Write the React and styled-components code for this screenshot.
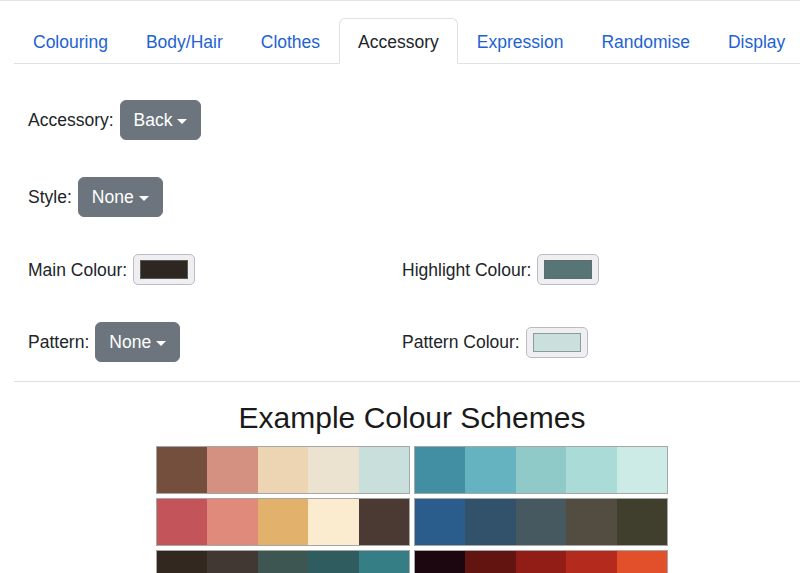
import React from 'react';
import styled, { createGlobalStyle } from 'styled-components';

const GlobalStyle = createGlobalStyle`
  html, body {
    margin: 0;
    padding: 0;
    background: #ffffff;
    overflow: hidden;
  }
  body {
    font-family: "Liberation Sans", Arial, sans-serif;
    color: #212529;
    border-top: 1px solid #e4e4e4;
  }
`;

const Page = styled.div`
  width: 796px;
  margin-left: 14px;
  padding-top: 17px;
`;

const Tabs = styled.ul`
  display: flex;
  list-style: none;
  margin: 0;
  padding: 0;
  border-bottom: 1px solid #dee2e6;
`;

const Tab = styled.li`
  margin-bottom: -1px;
  padding: 9.5px 18px 8.5px;
  font-size: 17.5px;
  line-height: 26px;
  white-space: nowrap;
  border: 1px solid ${(p) => (p.$active ? '#dee2e6' : 'transparent')};
  border-bottom-color: ${(p) => (p.$active ? '#ffffff' : 'transparent')};
  border-radius: 6px 6px 0 0;
  background: ${(p) => (p.$active ? '#ffffff' : 'transparent')};
  color: ${(p) => (p.$active ? '#212529' : '#1d63d3')};
`;

const Form = styled.div`
  display: flex;
  flex-direction: column;
  gap: 37px;
  padding: 36px 14px 19px;
  border-bottom: 1px solid #dcdfe2;
`;

const Pair = styled.div`
  display: grid;
  grid-template-columns: 374px 1fr;
`;

const Field = styled.div`
  display: flex;
  align-items: center;
  gap: 6px;
`;

const Label = styled.span`
  font-size: 17.5px;
  line-height: 26px;
`;

const DropButton = styled.button`
  display: inline-flex;
  align-items: center;
  font-family: inherit;
  font-size: 17.5px;
  line-height: 26px;
  padding: 6px 13px;
  color: #ffffff;
  background: #6c757d;
  border: 1px solid #6c757d;
  border-radius: 6px;

  &::after {
    content: '';
    display: inline-block;
    margin-left: 5px;
    margin-top: 2px;
    border-top: 5px solid #ffffff;
    border-left: 5px solid transparent;
    border-right: 5px solid transparent;
  }
`;

const ColourWell = styled.div`
  box-sizing: border-box;
  width: 62px;
  height: 31px;
  padding: 5px 6px;
  background: #efeff1;
  border: 1px solid #bdb9c6;
  border-radius: 5px;
  display: flex;
`;

const Swatch = styled.div`
  flex: 1;
  background: ${(p) => p.$c};
  border: 1px solid ${(p) => p.$edge};
`;

const Heading = styled.h3`
  margin: 18px 0 10px;
  text-align: center;
  font-size: 30px;
  font-weight: 400;
  line-height: 36px;
  color: #1a1a1a;
`;

const Schemes = styled.div`
  display: grid;
  grid-template-columns: repeat(2, 254px);
  justify-content: center;
  gap: 4px;
`;

const Palette = styled.div`
  display: flex;
  height: 48px;
  box-sizing: border-box;
  border: 1px solid rgba(0, 0, 0, 0.35);
`;

const Chip = styled.div`
  flex: 1;
  background: ${(p) => p.$c};
`;

const tabs = ['Colouring', 'Body/Hair', 'Clothes', 'Accessory', 'Expression', 'Randomise', 'Display'];

const palettes = [
  ['#744f3e', '#d49080', '#edd5b3', '#ebe3d0', '#c9dfdc'],
  ['#428ea3', '#65b2c0', '#8fcac9', '#aadbd6', '#cdebe6'],
  ['#c3545a', '#e08a7b', '#e2b26c', '#fbebcf', '#4a3a33'],
  ['#2a5c8c', '#32526c', '#465860', '#524d40', '#403e2c'],
  ['#322820', '#423833', '#3e5652', '#2f5c5e', '#367e86'],
  ['#1c0610', '#621410', '#921d16', '#b42b1e', '#e1502a'],
];

function ColourInput({ colour, edge }) {
  return (
    <ColourWell>
      <Swatch $c={colour} $edge={edge} />
    </ColourWell>
  );
}

export default function App() {
  return (
    <Page>
      <GlobalStyle />
      <Tabs>
        {tabs.map((t) => (
          <Tab key={t} $active={t === 'Accessory'}>
            {t}
          </Tab>
        ))}
      </Tabs>
      <Form>
        <Field>
          <Label>Accessory:</Label>
          <DropButton>Back</DropButton>
        </Field>
        <Field>
          <Label>Style:</Label>
          <DropButton>None</DropButton>
        </Field>
        <Pair>
          <Field>
            <Label>Main Colour:</Label>
            <ColourInput colour="#2e2620" edge="#5a5a5a" />
          </Field>
          <Field>
            <Label>Highlight Colour:</Label>
            <ColourInput colour="#587576" edge="#5f6b6c" />
          </Field>
        </Pair>
        <Pair>
          <Field>
            <Label>Pattern:</Label>
            <DropButton>None</DropButton>
          </Field>
          <Field>
            <Label>Pattern Colour:</Label>
            <ColourInput colour="#c9e0dd" edge="#8c9a98" />
          </Field>
        </Pair>
      </Form>
      <Heading>Example Colour Schemes</Heading>
      <Schemes>
        {palettes.map((p, i) => (
          <Palette key={i}>
            {p.map((c, j) => (
              <Chip key={j} $c={c} />
            ))}
          </Palette>
        ))}
      </Schemes>
    </Page>
  );
}
